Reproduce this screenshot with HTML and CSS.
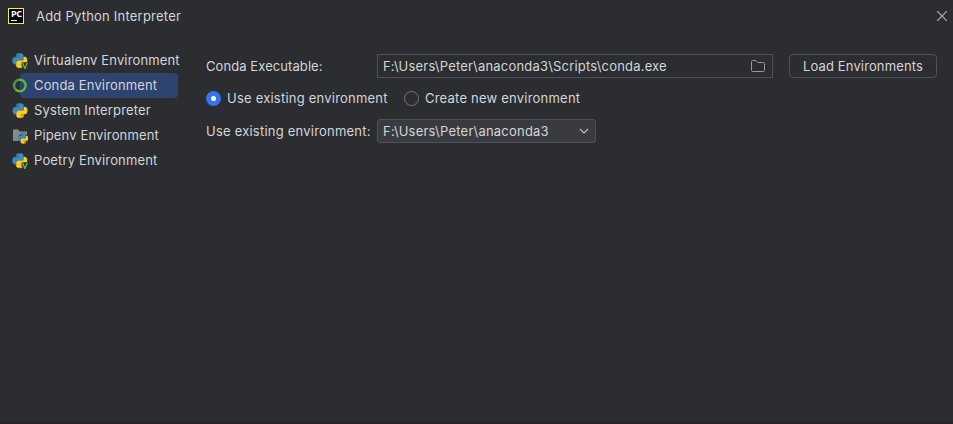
FILE: index.html
```html
<!DOCTYPE html>
<html lang="en">
<head>
<meta charset="utf-8">
<title>Add Python Interpreter</title>
<link rel="stylesheet" href="styles.css">
</head>
<body>
<svg class="defs" width="0" height="0" aria-hidden="true">
  <defs>
    <path id="snake" d="M14.25.18l.9.2.73.26.59.3.45.32.34.34.25.34.16.33.1.3.04.26.02.2-.01.13V8.5l-.05.63-.13.55-.21.46-.26.38-.3.31-.33.25-.35.19-.35.14-.33.1-.3.07-.26.04-.21.02H8.77l-.69.05-.59.14-.5.22-.41.27-.33.32-.27.35-.2.36-.15.37-.1.35-.07.32-.04.27-.02.21v3.06H3.17l-.21-.03-.28-.07-.32-.12-.35-.18-.36-.26-.36-.36-.35-.46-.32-.59-.28-.73-.21-.88-.14-1.05-.05-1.23.06-1.22.16-1.04.24-.87.32-.71.36-.57.4-.44.42-.33.42-.24.4-.16.36-.1.32-.05.24-.01h.16l.06.01h8.16v-.83H6.18l-.01-2.75-.02-.37.05-.34.11-.31.17-.28.25-.26.31-.23.38-.2.44-.18.51-.15.58-.12.64-.1.71-.06.77-.04.84-.02 1.27.05zm-6.3 1.98l-.23.33-.08.41.08.41.23.34.33.22.41.09.41-.09.33-.22.23-.34.08-.41-.08-.41-.23-.33-.33-.22-.41-.09-.41.09z"/>
    <g id="python">
      <use href="#snake" fill="#3e8cc0" stroke="#3e8cc0" stroke-width=".7"/>
      <use href="#snake" fill="#fbcc2c" stroke="#fbcc2c" stroke-width=".7" transform="rotate(180 12 12)"/>
    </g>
    <g id="python-venv">
      <use href="#python" transform="translate(.6 .4) scale(.6)"/>
      <path d="M9.4 9.6h1.2l2.2 6.4H10.6zM10.4 9.3H16V16h-4z" fill="#2b2d30"/>
      <path d="M10.5 9.8l2.4 5.7 2.4-5.7" fill="none" stroke="#62b543" stroke-width="1.4"/>
    </g>
  </defs>
</svg>
<div class="dialog">
  <header class="titlebar">
    <span class="logo">PC</span>
    <h1 class="title">Add Python Interpreter</h1>
    <svg class="close" width="12" height="12" viewBox="0 0 12 12"><path d="M1.2 1.2l9.6 9.6M10.8 1.2l-9.6 9.6" stroke="#b4b5b9" stroke-width="1.1"/></svg>
  </header>
  <main class="content">
    <nav class="sidebar">
      <div class="item">
        <svg class="icon" viewBox="0 0 16 16"><use href="#python-venv"/></svg>
        <span class="label">Virtualenv Environment</span>
      </div>
      <div class="item selected">
        <svg class="icon" viewBox="0 0 16 16"><circle cx="7.8" cy="7.5" r="5.8" fill="none" stroke="#55b848" stroke-width="2.4"/><path d="M3.3 11.2A5.8 5.8 0 0 1 6.6 1.8" fill="none" stroke="#2b2d30" stroke-width="2.4" stroke-dasharray=".4 1.4"/></svg>
        <span class="label">Conda Environment</span>
      </div>
      <div class="item">
        <svg class="icon" viewBox="0 0 16 16"><use href="#python" transform="translate(.8 .4) scale(.6)"/></svg>
        <span class="label">System Interpreter</span>
      </div>
      <div class="item">
        <svg class="icon" viewBox="0 0 16 16"><path d="M1 1.5h5.2l1.6 2H15v9.5H1z" fill="#7f8b91"/><circle cx="11.2" cy="10.6" r="5" fill="#2b2d30"/><use href="#python" transform="translate(6.2 5.4) scale(.42)"/></svg>
        <span class="label">Pipenv Environment</span>
      </div>
      <div class="item">
        <svg class="icon" viewBox="0 0 16 16"><use href="#python-venv"/></svg>
        <span class="label">Poetry Environment</span>
      </div>
    </nav>
    <section class="form">
      <div class="row">
        <span class="field-label exe">Conda Executable:</span>
        <div class="input"><span class="path">F:\Users\Peter\anaconda3\Scripts\conda.exe</span>
          <svg width="16" height="14" viewBox="0 0 16 14"><path d="M1.5 2.6q0-1.1 1.1-1.1h3.2l2 2h5.6q1.1 0 1.1 1.1v6.8q0 1.1-1.1 1.1H2.6q-1.1 0-1.1-1.1z" fill="none" stroke="#96999e"/></svg>
        </div>
        <button class="button">Load Environments</button>
      </div>
      <div class="radios">
        <span class="radio on"></span><span class="radio-label first">Use existing environment</span>
        <span class="radio"></span><span class="radio-label">Create new environment</span>
      </div>
      <div class="row">
        <span class="field-label">Use existing environment:</span>
        <div class="select"><span class="path">F:\Users\Peter\anaconda3</span>
          <svg width="10" height="6" viewBox="0 0 10 6"><path d="M1 1l4 4 4-4" fill="none" stroke="#bfc1c6" stroke-width="1.1"/></svg>
        </div>
      </div>
    </section>
  </main>
</div>
</body>
</html>
```
FILE: styles.css
```css
* { box-sizing: border-box; }
body {
  margin: 0;
  background: #2b2d30;
  color: #d3d5da;
  font: 13px/16px Inter, "Liberation Sans", sans-serif;
  letter-spacing: .22px;
  white-space: nowrap;
}
.defs { display: block; }
.dialog { height: 424px; border-bottom: 3px solid #2b2529; overflow: hidden; }
.titlebar { display: flex; align-items: center; height: 32px; padding: 0 5px 0 8px; }
.logo {
  width: 16px; height: 16px;
  border: 1px solid #f3ea55;
  background: linear-gradient(#fff, #fff) 2px 11px / 6px 1px no-repeat #000;
  color: #fff;
  font: bold 9px/9px "Open Sans", sans-serif;
  letter-spacing: -.3px;
  padding: 0 0 0 2px;
}
.title { margin: 0 auto 0 12px; font-size: 13px; font-weight: 400; letter-spacing: .22px; }
.content { display: flex; padding-top: 16px; }
.sidebar { width: 206px; padding-left: 12px; letter-spacing: .15px; }
.item { display: flex; align-items: center; height: 25px; width: 166px; }
.item .label { padding-bottom: 1px; line-height: 16px; }
.selected { position: relative; z-index: 0; }
.selected::before { content: ""; position: absolute; inset: 0 0 0 8px; border-radius: 4px; background: #2e436e; z-index: -1; }
.icon { flex: none; width: 16px; height: 16px; margin-right: 6px; }
.form { width: 731px; padding-top: 6px; }
.row { display: flex; align-items: center; height: 24px; }
.field-label { width: 171px; }
.exe { letter-spacing: .08px; }
.input, .select { display: flex; align-items: center; justify-content: space-between; height: 24px; border: 1px solid #4e5157; padding: 0 6px 0 5px; }
.input { width: 396px; letter-spacing: .19px; }
.select { width: 219px; border-radius: 3px; background: #393b40; }
.button { width: 148px; height: 24px; margin-left: 16px; padding: 0; border: 1px solid #4e5157; border-radius: 4px; background: none; color: inherit; font: inherit; letter-spacing: .13px; }
.radios { display: flex; align-items: center; height: 41px; }
.radio { width: 15px; height: 15px; border: 1px solid #73767c; border-radius: 50%; }
.radio.on { border: 5px solid #3574f0; background: #fff; }
.radio-label { margin-left: 6px; padding-bottom: 1px; }
.first { width: 177px; }
```
